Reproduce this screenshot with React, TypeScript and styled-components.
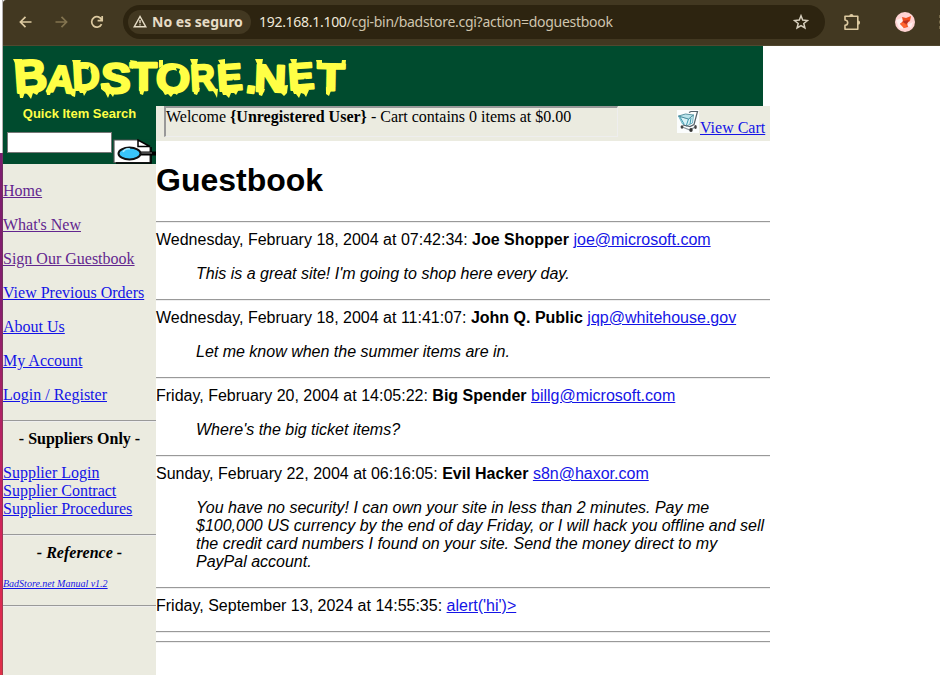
import React from "react";
import styled, { createGlobalStyle } from "styled-components";

const GlobalStyle = createGlobalStyle`
  html, body { margin: 0; padding: 0; background: #fff; overflow: hidden; }
  * { box-sizing: border-box; }
`;

const Screen = styled.div`
  display: grid;
  grid-template-columns: 3px 937px;
  width: 940px;
  height: 675px;
  overflow: hidden;
`;

const DesktopEdge = styled.div`
  background: linear-gradient(#fff 0 153px, #7c1d70 153px, #861d6e 300px, #b52263 430px, #d92556 560px, #e03048 675px);
  border-right: 1px solid rgba(90, 80, 80, 0.45);
`;

const Browser = styled.div`
  display: flex;
  flex-direction: column;
  background: #fff;
`;

const Toolbar = styled.header`
  display: flex;
  align-items: center;
  height: 46px;
  padding-bottom: 2px;
  background: #423821;
  border-bottom: 1px solid #51482f;
  border-top-left-radius: 3px;
  font-family: "Noto Sans", "Open Sans", sans-serif;
  overflow: hidden;
`;

const ToolIcon = styled.svg<{ $gap: number; $color?: string }>`
  flex: none;
  margin-left: ${(p) => p.$gap}px;
  color: ${(p) => p.$color ?? "#dcc9a0"};
  fill: none;
  stroke: currentColor;
`;

const AddressBar = styled.div`
  display: flex;
  align-items: center;
  width: 702px;
  height: 34px;
  margin-left: 19px;
  padding-left: 5px;
  border-radius: 17px;
  background: #2d2410;
  flex: none;
`;

const SecurityChip = styled.div`
  display: flex;
  align-items: center;
  width: 123px;
  height: 24px;
  border-radius: 12px;
  background: #423821;
  color: #e6dcc6;
  font-size: 14px;
  font-weight: 700;
  white-space: nowrap;
  flex: none;
`;

const ChipLabel = styled.span`
  margin-left: 5px;
`;

const Url = styled.span`
  width: 533px;
  margin-left: 8px;
  color: #cfc5ae;
  font-size: 14px;
  letter-spacing: -0.29px;
  white-space: nowrap;
`;

const Host = styled.span`
  color: #f0e8d8;
`;

const ToolDivider = styled.div`
  width: 2px;
  height: 16px;
  margin-left: 17px;
  background: #5d5132;
`;

const Banner = styled.div`
  width: 760px;
  height: 60px;
  background: #004b2e;
`;

const LogoText = styled.text`
  font-family: "Liberation Sans", Arial, sans-serif;
  font-weight: 700;
  fill: #ffff45;
  stroke: #ffff45;
  stroke-width: 2.4px;
  stroke-linejoin: round;
`;

const Page = styled.div`
  display: grid;
  grid-template-columns: 153px 614px;
  height: 569px;
`;

const Sidebar = styled.aside`
  background: #ebebe0;
  font: 16px/18px "Liberation Serif", "Times New Roman", serif;
`;

const SearchBox = styled.div`
  height: 58px;
  background: #004b2e;
`;

const SearchTitle = styled.div`
  height: 26px;
  text-align: center;
  color: #ffff45;
  font: bold 13px/15px "Liberation Sans", Arial, sans-serif;
`;

const SearchRow = styled.div`
  display: flex;
  align-items: flex-start;
  padding-left: 4px;
`;

const SearchInput = styled.input`
  width: 105px;
  height: 21px;
  border: 1px solid #767676;
  border-radius: 0;
  background: #fff;
  outline: none;
  padding: 1px 2px;
`;

const SearchIcon = styled.svg`
  margin: 7px 0 0 1px;
  flex: none;
`;

const NavList = styled.nav`
  display: flex;
  flex-direction: column;
  align-items: flex-start;
  gap: 16px;
  padding: 18px 0 16px;
`;

const Anchor = styled.a<{ $visited?: boolean }>`
  color: ${(p) => (p.$visited ? "#62268f" : "#1414e6")};
  text-decoration: underline;
  white-space: nowrap;
`;

const Rule = styled.hr`
  height: 2px;
  margin: 0 0 8px;
  border: 0;
  border-top: 1px solid #999;
  border-bottom: 1px solid #eee;
`;

const SideHeading = styled.div<{ $italic?: boolean }>`
  height: 34px;
  text-align: center;
  font-weight: 700;
  font-style: ${(p) => (p.$italic ? "italic" : "normal")};
`;

const SupplierLinks = styled.div`
  display: flex;
  flex-direction: column;
  align-items: flex-start;
  padding-bottom: 16px;
`;

const Reference = styled.div`
  height: 27px;
  font-size: 10px;
  line-height: 11px;
  font-style: italic;
`;

const Content = styled.main`
  font: 16px/18px "Liberation Sans", Arial, sans-serif;
  color: #000;
`;

const StatusBar = styled.div`
  display: flex;
  height: 35px;
  padding-left: 8px;
  background: #ebebe0;
  font-family: "Liberation Serif", "Times New Roman", serif;
`;

const WelcomeFrame = styled.div`
  width: 454px;
  height: 31px;
  border: solid;
  border-width: 2px 1px 1px 2px;
  border-color: #999 #eee #eee #999;
  white-space: nowrap;
`;

const Cart = styled.div`
  display: flex;
  align-items: flex-start;
  margin-left: 59px;
  padding-top: 4px;
`;

const CartLabel = styled.div`
  padding: 9px 0 0 1px;
`;

const Title = styled.h1`
  margin: 21px 0 22px;
  font-size: 32px;
  line-height: 37px;
`;

const Entry = styled.article`
  display: flow-root;
`;

const EntryHead = styled.div`
  white-space: nowrap;
`;

const Comment = styled.blockquote`
  margin: 16px 0 16px 40px;
  width: 574px;
  font-style: italic;
`;

const Spacer = styled.div`
  height: 16px;
`;

const pages = [
  { label: "Home", visited: true },
  { label: "What's New", visited: true },
  { label: "Sign Our Guestbook", visited: true },
  { label: "View Previous Orders" },
  { label: "About Us" },
  { label: "My Account" },
  { label: "Login / Register" },
];

const suppliers = ["Supplier Login", "Supplier Contract", "Supplier Procedures"];

const entries = [
  { date: "Wednesday, February 18, 2004 at 07:42:34:", name: "Joe Shopper", mail: "joe@microsoft.com", text: "This is a great site! I'm going to shop here every day." },
  { date: "Wednesday, February 18, 2004 at 11:41:07:", name: "John Q. Public", mail: "jqp@whitehouse.gov", text: "Let me know when the summer items are in." },
  { date: "Friday, February 20, 2004 at 14:05:22:", name: "Big Spender", mail: "billg@microsoft.com", text: "Where's the big ticket items?" },
  { date: "Sunday, February 22, 2004 at 06:16:05:", name: "Evil Hacker", mail: "s8n@haxor.com", text: "You have no security! I can own your site in less than 2 minutes. Pay me $100,000 US currency by the end of day Friday, or I will hack you offline and sell the credit card numbers I found on your site. Send the money direct to my PayPal account." },
  { date: "Friday, September 13, 2024 at 14:55:35:", mail: "alert('hi')>" },
];

/* letter, left, baseline, font size, horizontal stretch, rotation */
const letters: [string, number, number, number, number, number][] = [
  ["B", 12, 47, 46, 1.0, -4],
  ["A", 43, 45, 38, 1.0, 5],
  ["D", 70, 44, 38, 1.0, -3],
  ["S", 97, 46, 42, 1.08, 3],
  ["T", 127, 44, 38, 1.16, 0],
  ["O", 152, 45, 40, 1.1, 4],
  ["R", 188, 45, 37, 0.92, -3],
  ["E", 215, 45, 37, 1.02, -4],
  [".", 242, 46, 42, 0.95, 8],
  ["N", 251, 45, 38, 1.16, 2],
  ["E", 286, 44, 37, 1.05, -4],
  ["T", 314, 44, 38, 1.18, 1],
];

function Logo() {
  return (
    <svg width="360" height="60" role="img" aria-label="BadStore.net">
      {letters.map(([ch, x, y, size, stretch, turn], i) => (
        <LogoText key={i} fontSize={size} transform={`translate(${x} ${y}) rotate(${turn}) scale(${stretch} 1)`}>
          {ch}
        </LogoText>
      ))}
      <path
        fill="#ffff45"
        d="M10 13l9 0 0 7-5 1zM16 45l1 7 3 0 2-6 3 3 3 4 2-6 4 2 3-5zM43 44l1 5 3 0 2-6zM64 42l5 8 3 1 1-8zM69 14l9 0-2 6-5 0zM75 43l2 4 3 0 1 3 3-5 3 0zM98 40l0 3 4 3 3 6 2-5 3 4 2-5 3 2 2-5zM127 14l2 9 4-3 1-5zM136 41l1 7 3 1 2-7zM156 14l0 8 4-2 0-6zM158 42l4 7 3-1 3 3 3-4 3 2 3-7zM187 13l8 0-1 6-4 2zM190 43l1 5 3 1 3-7zM208 42l4 6 2 4 1-9zM215 14l7-1 0 7-3 1zM218 43l2 6 3 0 3 3 2-5 3 0 2 2 3-6zM252 13l8 0-1 6-4 1zM255 43l1 6 3 1 3-7zM275 40l3 7 3 3 3-3 1-8zM287 13l7 0-1 7-3 0zM289 43l2 5 2 0 3 4 2-5 3 1 2 3 3-7zM313 14l2 8 4-3 0-5zM343 14l-1 9-4-3 1-6zM323 41l0 7 3 2 3-8z"
      />
      <path fill="#004b2e" d="M85 23l2-3 1 6zM173 22l2 6 2-5zM229 37l1-4 3 4zM300 36l2-4 2 4zM112 25l2 4 2-5z" />
    </svg>
  );
}

function BrowserToolbar() {
  return (
    <Toolbar>
      <ToolIcon $gap={16} width="13" height="14" viewBox="0 0 13 14" strokeWidth="1.7">
        <path d="M12.5 7H1.5M6.5 1.8L1.4 7l5.1 5.2" />
      </ToolIcon>
      <ToolIcon $gap={23} $color="#82734f" width="13" height="14" viewBox="0 0 13 14" strokeWidth="1.7">
        <path d="M.5 7h11M6.5 1.8L11.6 7l-5.1 5.2" />
      </ToolIcon>
      <ToolIcon $gap={22} width="14" height="14" viewBox="0 0 14 14" strokeWidth="1.7">
        <path d="M11.6 9.1a5.2 5.2 0 1 1 .1-4.1M12.2 1v4.6H7.600" />
      </ToolIcon>
      <AddressBar>
        <SecurityChip>
          <ToolIcon $gap={5} $color="#e6dcc6" width="14" height="13" viewBox="0 0 14 13" strokeWidth="1.4">
            <path d="M7 1.5L1.2 11.8h11.600zM7 5v3.3M7 9.2v1.4" />
          </ToolIcon>
          <ChipLabel>No es seguro</ChipLabel>
        </SecurityChip>
        <Url>
          <Host>192.168.1.100</Host>/cgi-bin/badstore.cgi?action=doguestbook
        </Url>
        <ToolIcon $gap={1} $color="#d7cfbd" width="16" height="16" viewBox="0 0 16 16" strokeWidth="1.5">
          <path d="M8 1.8l1.7 4.3 4.7.4-3.6 3 1.1 4.5L8 11.6 4.1 14l1.1-4.5-3.6-3 4.7-.4z" />
        </ToolIcon>
      </AddressBar>
      <ToolIcon $gap={18} width="18" height="18" viewBox="0 0 18 18" strokeWidth="1.6">
        <path d="M2 3.2h12.8v13H2v-3.800c3.600-.5 3.600-4.900 0-5.400z" strokeLinejoin="round" />
        <path d="M6.300 3a2.100 2.100 0 0 1 4.200 0zM15 7.600a2.100 2.100 0 0 1 0 4.200z" fill="currentColor" stroke="none" />
      </ToolIcon>
      <ToolDivider />
      <ToolIcon $gap={17} width="20" height="20" viewBox="0 0 20 20">
        <circle cx="10" cy="10" r="10" fill="#ffd3d3" stroke="none" />
        <path d="M1 8l6-2 1 11-4-1zM12 13l6-3-2 6z" fill="#ffeeee" stroke="none" />
        <path d="M7 5l4 1 5-2-1 5-3 2 1 4-4 1-4-4 3-3z" fill="#ef4e20" stroke="none" />
        <path d="M8 9l6-1-2 4-3-1z" fill="#b92f1f" stroke="none" />
        <path d="M5 11l4 0 3 3-3 2z" fill="#ff6530" stroke="none" />
      </ToolIcon>
      <ToolIcon $gap={23} width="4" height="16" viewBox="0 0 4 16">
        <path d="M1 1h3v3H1zM1 6.5h3v3H1zM1 12h3v3H1z" fill="#756848" stroke="none" />
      </ToolIcon>
    </Toolbar>
  );
}

function CartPicture() {
  return (
    <svg width="22" height="23" viewBox="0 0 22 23">
      <path fill="#fbfdfd" d="M0 0h22v23H0z" />
      <path d="M1.500 6l10 3 5-4-1 8-6 3-4-2z" fill="#d9f2f7" stroke="#4aa0b4" strokeWidth=".8" />
      <path d="M1.500 6l7-2 8 1-5 4z" fill="#b9e4ec" stroke="#3b7d8e" strokeWidth=".8" />
      <path d="M11.500 9l-2 6M3 7l4 7M14 8l-1 6" fill="none" stroke="#3d9ab0" />
      <path d="M12 2.500l2-1h6.500l-3.500 13-4 2-7-1.500" fill="none" stroke="#55626b" strokeWidth="1.200" />
      <path d="M4 16.500l9 3.500 5-3" fill="none" stroke="#8b959c" strokeWidth="1.200" />
      <ellipse cx="5" cy="17" rx="1.400" ry="1.700" fill="#444" />
      <ellipse cx="14" cy="20" rx="1.700" ry="2" fill="#333" />
      <ellipse cx="18.500" cy="17" rx="1.300" ry="1.900" fill="#444" />
    </svg>
  );
}

export default function App() {
  return (
    <>
      <GlobalStyle />
      <Screen>
        <DesktopEdge />
        <Browser>
          <BrowserToolbar />
          <Banner>
            <Logo />
          </Banner>
          <Page>
            <Sidebar>
              <SearchBox>
                <SearchTitle>Quick Item Search</SearchTitle>
                <SearchRow>
                  <SearchInput aria-label="Search" />
                  <SearchIcon width="43" height="25" viewBox="0 0 43 25">
                    <path d="M1 1h24l12 7v15.500H1z" fill="#fff" stroke="#555" strokeWidth="1.200" />
                    <path d="M25 .400h14v8z" fill="#004b2e" />
                    <path d="M25 1v6.500h12z" fill="#fff" stroke="#000" strokeWidth="1.500" />
                    <path d="M38 8v16H3" fill="none" stroke="#000" strokeWidth="1.600" />
                    <path d="M26 14.500h17" stroke="#000" strokeWidth="4" />
                    <path d="M28 14h11" stroke="#888" strokeWidth="1" />
                    <ellipse cx="16.500" cy="14.500" rx="11" ry="6" fill="#39c5fa" stroke="#111" strokeWidth="2" />
                    <path d="M10 13q2-4 7-3" fill="none" stroke="#a6eaff" strokeWidth="1.500" />
                  </SearchIcon>
                </SearchRow>
              </SearchBox>
              <NavList>
                {pages.map((p) => (
                  <Anchor key={p.label} $visited={p.visited}>{p.label}</Anchor>
                ))}
              </NavList>
              <Rule />
              <SideHeading>- Suppliers Only -</SideHeading>
              <SupplierLinks>
                {suppliers.map((s) => (
                  <Anchor key={s}>{s}</Anchor>
                ))}
              </SupplierLinks>
              <Rule />
              <SideHeading $italic>- Reference -</SideHeading>
              <Reference>
                <Anchor>BadStore.net Manual v1.2</Anchor>
              </Reference>
              <Rule />
            </Sidebar>
            <Content>
              <StatusBar>
                <WelcomeFrame>
                  Welcome <b>{"{Unregistered User}"}</b> - Cart contains 0 items at $0.00
                </WelcomeFrame>
                <Cart>
                  <CartPicture />
                  <CartLabel>
                    <Anchor>View Cart</Anchor>
                  </CartLabel>
                </Cart>
              </StatusBar>
              <Title>Guestbook</Title>
              <Rule />
              {entries.map((e) => (
                <Entry key={e.date}>
                  <EntryHead>
                    {e.date} {e.name && <b>{e.name} </b>}
                    <Anchor>{e.mail}</Anchor>
                  </EntryHead>
                  {e.text ? <Comment>{e.text}</Comment> : <Spacer />}
                  <Rule />
                </Entry>
              ))}
              <Rule />
            </Content>
          </Page>
        </Browser>
      </Screen>
    </>
  );
}
